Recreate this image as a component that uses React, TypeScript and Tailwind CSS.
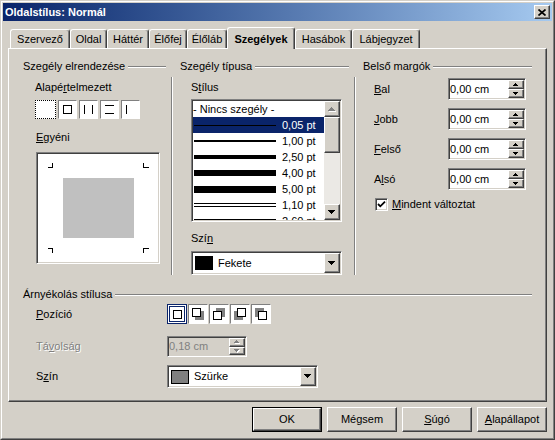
import clsx from "clsx";

const raised =
  "border border-t-white border-l-white border-r-[#404040] border-b-[#404040] [box-shadow:inset_-1px_-1px_#808080]";
const sunken =
  "border border-t-[#808080] border-l-[#808080] border-r-white border-b-white [box-shadow:inset_1px_1px_#404040,inset_-1px_-1px_#d4d0c8]";

const tabs = [
  { label: "Szervező", width: "w-[60px]" },
  { label: "Oldal", width: "w-[37px]" },
  { label: "Háttér", width: "w-[42px]" },
  { label: "Élőfej", width: "w-[38px]" },
  { label: "Élőláb", width: "w-[40px]" },
  { label: "Szegélyek", width: "w-[68px]", active: true },
  { label: "Hasábok", width: "w-[57px]" },
  { label: "Lábjegyzet", width: "w-[68px]" },
];

// line samples for the style list; each entry is a list of bar heights
const lineStyles = [
  { label: "0,05 pt", bars: ["h-px"] },
  { label: "1,00 pt", bars: ["h-[2px]"] },
  { label: "2,50 pt", bars: ["h-[4px]"] },
  { label: "4,00 pt", bars: ["h-[6px]"] },
  { label: "5,00 pt", bars: ["h-[7px]"] },
  { label: "1,10 pt", bars: ["h-px", "h-px"] },
  { label: "2,60 pt", bars: ["h-px", "h-[2px]"] },
];

function GroupHeader({ title }: { title: string }) {
  return (
    <div className="flex h-[13px] items-center">
      <span className="whitespace-nowrap">{title}</span>
      <div className="ml-[3px] h-[2px] flex-1 border-t border-b border-t-[#808080] border-b-white" />
    </div>
  );
}

function VSep() {
  return <div className="ml-[5px] mt-[17px] h-[198px] w-[2px] border-l border-r border-l-[#808080] border-r-white" />;
}

function SmallArrow({ up, disabled }: { up?: boolean; disabled?: boolean }) {
  const pts = up ? "2.5,0 5,3 0,3" : "0,0 5,0 2.5,3";
  return (
    <svg width="6" height="4" viewBox="0 0 6 4" shapeRendering="crispEdges">
      {disabled && <polygon points={pts} fill="#fff" transform="translate(1,1)" />}
      <polygon points={pts} fill={disabled ? "#808080" : "#000"} />
    </svg>
  );
}

function BigArrow({ up, disabled }: { up?: boolean; disabled?: boolean }) {
  const pts = up ? "3.5,0 7,4 0,4" : "0,0 7,0 3.5,4";
  return (
    <svg width="8" height="5" viewBox="0 0 8 5" shapeRendering="crispEdges">
      {disabled && <polygon points={pts} fill="#fff" transform="translate(1,1)" />}
      <polygon points={pts} fill={disabled ? "#808080" : "#000"} />
    </svg>
  );
}

function SpinBox({ value, className, disabled }: { value: string; className: string; disabled?: boolean }) {
  return (
    <div
      className={clsx(
        "flex p-px",
        sunken,
        disabled ? "bg-[#d4d0c8] text-[#808080]" : "bg-white",
        className
      )}
    >
      <div className="flex flex-1 items-center">{value}</div>
      <div className="flex w-[16px] flex-col">
        <div className={clsx("flex flex-1 items-center justify-center bg-[#d4d0c8]", raised)}>
          <SmallArrow up disabled={disabled} />
        </div>
        <div className={clsx("flex flex-1 items-center justify-center bg-[#d4d0c8]", raised)}>
          <SmallArrow disabled={disabled} />
        </div>
      </div>
    </div>
  );
}

function ColorSelect({ label, swatch, className }: { label: string; swatch: string; className: string }) {
  return (
    <div className={clsx("flex bg-white p-px", sunken, className)}>
      <div className="flex flex-1 items-center">
        <span className={clsx("ml-[2px] h-[14px] w-[18px] border border-black", swatch)} />
        <span className="ml-[5px]">{label}</span>
      </div>
      <div className={clsx("flex w-[16px] items-center justify-center bg-[#d4d0c8]", raised)}>
        <BigArrow />
      </div>
    </div>
  );
}

function PresetBox({ children }: { children?: React.ReactNode }) {
  return (
    <div className="h-[19px] w-[19px] border border-t-[#808080] border-l-[#808080] border-r-white border-b-white bg-white">
      <svg width="17" height="17" viewBox="0 0 17 17" shapeRendering="crispEdges">
        {children}
      </svg>
    </div>
  );
}

function ShadowIcon({ kind, selected }: { kind: number; selected?: boolean }) {
  // square / shadow offsets for: none, bottom-right, top-right, bottom-left, top-left
  const sq = [
    [5, 5],
    [3, 3],
    [3, 6],
    [6, 3],
    [6, 6],
  ][kind];
  const sh = [null, [6, 6], [6, 3], [3, 6], [3, 3]][kind];
  return (
    <div
      className={clsx(
        "h-[20px] w-[20px] border bg-white",
        selected
          ? "border-[#0a246a] [box-shadow:inset_0_0_0_1px_#fff,inset_0_0_0_2px_#0a246a]"
          : "border-t-[#808080] border-l-[#808080] border-r-white border-b-white"
      )}
    >
      <svg width="18" height="18" viewBox="0 0 18 18" shapeRendering="crispEdges">
        {sh && <rect x={sh[0]} y={sh[1]} width="9" height="9" fill="#808080" />}
        <rect x={sq[0] + 0.5} y={sq[1] + 0.5} width="8" height="8" fill="#fff" stroke="#000" />
      </svg>
    </div>
  );
}

function Button({ children, isDefault }: { children: React.ReactNode; isDefault?: boolean }) {
  const inner = (
    <div className={clsx("flex h-full w-full items-center justify-center bg-[#d4d0c8]", raised)}>{children}</div>
  );
  return (
    <div className={clsx("h-[25px] w-[70px]", isDefault && "border border-black")}>{inner}</div>
  );
}

export default function App() {
  return (
    <div className="h-[440px] w-[555px] border border-t-[#d4d0c8] border-l-[#d4d0c8] border-r-[#404040] border-b-[#404040] bg-[#d4d0c8] font-['Liberation_Sans',Arial,sans-serif] text-[11px] leading-[13px] text-black">
      <div className="flex h-full flex-col border border-t-white border-l-white border-r-[#808080] border-b-[#808080] p-px">
        {/* title bar */}
        <div className="flex h-[18px] items-center justify-between bg-linear-to-r from-[#0a246a] to-[#a6caf0] pl-[2px] pr-[2px]">
          <span className="font-bold text-white">Oldalstílus: Normál</span>
          <div className={clsx("flex h-[14px] w-[16px] items-center justify-center bg-[#d4d0c8]", raised)}>
            <svg width="8" height="7" viewBox="0 0 8 7">
              <path d="M0.5 0.5 L7.5 6.5 M7.5 0.5 L0.5 6.5" stroke="#000" strokeWidth="1.7" />
            </svg>
          </div>
        </div>

        {/* tabs */}
        <div className="relative z-10 ml-[7px] mt-[6px] flex h-[21px] items-end">
          {tabs.map((t) => (
            <div
              key={t.label}
              className={clsx(
                "flex items-center justify-center rounded-t-[3px] border-t border-l border-r border-t-white border-l-white border-r-[#404040] bg-[#d4d0c8] [box-shadow:inset_-1px_0_#808080]",
                t.width,
                t.active ? "-mb-px h-[22px] pt-px font-bold" : "h-[19px]"
              )}
            >
              {t.label}
            </div>
          ))}
        </div>

        {/* tab page */}
        <div className={clsx("mx-[5px] h-[354px] pt-[11px]", raised)}>
          <div className="flex items-start">
            {/* border arrangement */}
            <div className="ml-[14px] w-[143px]">
              <GroupHeader title="Szegély elrendezése" />
              <div className="mt-[8px] pl-[12px]">
                Alapé<u>r</u>telmezett
              </div>
              <div className="mt-[6px] flex gap-[2px] pl-[12px]">
                <div className="h-[19px] w-[21px] border border-dotted border-black bg-white" />
                <PresetBox>
                  <rect x="4.5" y="4.5" width="8" height="8" fill="none" stroke="#000" />
                </PresetBox>
                <PresetBox>
                  <path d="M4.5 4 V13 M12.5 4 V13" stroke="#000" />
                </PresetBox>
                <PresetBox>
                  <path d="M4 4.5 H13 M4 12.5 H13" stroke="#000" />
                </PresetBox>
                <PresetBox>
                  <path d="M4.5 4 V13" stroke="#000" />
                </PresetBox>
              </div>
              <div className="mt-[12px] pl-[13px]">
                <u>E</u>gyéni
              </div>
              <div className={clsx("ml-[13px] mt-[8px] h-[112px] w-[124px] bg-white p-px", sunken)}>
                <svg width="120" height="108" viewBox="0 0 120 108" shapeRendering="crispEdges">
                  <rect x="25" y="24" width="71" height="60" fill="#c0c0c0" />
                  <path
                    d="M10 13.5 H15 M14.5 9 V14 M105 13.5 H111 M105.5 9 V14 M10 94.5 H15 M14.5 94 V99 M105 94.5 H111 M105.5 94 V99"
                    stroke="#000"
                  />
                </svg>
              </div>
            </div>

            <VSep />

            {/* border type */}
            <div className="ml-[7px] w-[169px]">
              <GroupHeader title="Szegély típusa" />
              <div className="mt-[8px] pl-[11px]">
                S<u>t</u>ílus
              </div>
              <div className={clsx("ml-[11px] mt-[5px] flex h-[123px] w-[151px] bg-white p-px", sunken)}>
                <div className="flex-1 overflow-hidden">
                  <div className="flex h-[16px] items-center">- Nincs szegély -</div>
                  {lineStyles.map((s, i) => (
                    <div
                      key={s.label}
                      className={clsx("flex h-[16px] items-center", i === 0 && "bg-[#0a246a] text-white")}
                    >
                      <div className="ml-px flex w-[82px] flex-col gap-[2px]">
                        {s.bars.map((b, j) => (
                          <div key={j} className={clsx(b, "bg-black")} />
                        ))}
                      </div>
                      <span className="ml-[6px]">{s.label}</span>
                    </div>
                  ))}
                </div>
                <div className="flex w-[16px] flex-col">
                  <div className={clsx("flex h-[16px] items-center justify-center bg-[#d4d0c8]", raised)}>
                    <BigArrow up disabled />
                  </div>
                  <div className={clsx("h-[36px] bg-[#d4d0c8]", raised)} />
                  <div className="flex-1 bg-[#ebe9e5]" />
                  <div className={clsx("flex h-[16px] items-center justify-center bg-[#d4d0c8]", raised)}>
                    <BigArrow />
                  </div>
                </div>
              </div>
              <div className="mt-[10px] pl-[11px]">
                Szí<u>n</u>
              </div>
              <ColorSelect label="Fekete" swatch="bg-black" className="ml-[11px] mt-[6px] h-[24px] w-[151px]" />
            </div>

            <VSep />

            {/* inner margins */}
            <div className="ml-[7px] w-[169px]">
              <GroupHeader title="Belső margók" />
              <div className="mt-[5px] flex flex-col gap-[8px] pl-[11px]">
                <div className="flex items-center">
                  <span className="w-[74px]">
                    <u>B</u>al
                  </span>
                  <SpinBox value="0,00 cm" className="h-[22px] w-[78px]" />
                </div>
                <div className="flex items-center">
                  <span className="w-[74px]">
                    <u>J</u>obb
                  </span>
                  <SpinBox value="0,00 cm" className="h-[22px] w-[78px]" />
                </div>
                <div className="flex items-center">
                  <span className="w-[74px]">
                    <u>F</u>első
                  </span>
                  <SpinBox value="0,00 cm" className="h-[22px] w-[78px]" />
                </div>
                <div className="flex items-center">
                  <span className="w-[74px]">
                    A<u>l</u>só
                  </span>
                  <SpinBox value="0,00 cm" className="h-[22px] w-[78px]" />
                </div>
              </div>
              <div className="mt-[8px] flex items-center pl-[12px]">
                <div className={clsx("flex h-[13px] w-[13px] items-center justify-center bg-white", sunken)}>
                  <svg width="9" height="9" viewBox="0 0 9 9">
                    <polyline points="1,4 3.3,6.3 8,1.6" fill="none" stroke="#000" strokeWidth="1.8" />
                  </svg>
                </div>
                <span className="ml-[4px]">
                  <u>M</u>indent változtat
                </span>
              </div>
            </div>
          </div>

          {/* shadow style */}
          <div className="ml-[14px] mt-[13px] w-[509px]">
            <GroupHeader title="Árnyékolás stílusa" />
            <div className="mt-[3px] flex items-center">
              <span className="w-[144px] pl-[13px]">
                <u>P</u>ozíció
              </span>
              <div className="flex gap-px">
                <ShadowIcon kind={0} selected />
                <ShadowIcon kind={1} />
                <ShadowIcon kind={2} />
                <ShadowIcon kind={3} />
                <ShadowIcon kind={4} />
              </div>
            </div>
            <div className="mt-[12px] flex items-center">
              <span className="w-[144px] pl-[13px] text-[#808080] [text-shadow:1px_1px_0_#fff]">
                Tá<u>v</u>olság
              </span>
              <SpinBox value="0,18 cm" className="h-[21px] w-[80px]" disabled />
            </div>
            <div className="mt-[8px] flex items-center">
              <span className="w-[144px] pl-[13px]">
                S<u>z</u>ín
              </span>
              <ColorSelect label="Szürke" swatch="bg-[#808080]" className="h-[23px] w-[151px]" />
            </div>
          </div>
        </div>

        {/* dialog buttons */}
        <div className="mr-[5px] mt-[5px] flex justify-end gap-[5px]">
          <Button isDefault>OK</Button>
          <Button>Mégsem</Button>
          <Button>
            <span>
              <u>S</u>úgó
            </span>
          </Button>
          <Button>
            <span>
              <u>A</u>lapállapot
            </span>
          </Button>
        </div>
      </div>
    </div>
  );
}
